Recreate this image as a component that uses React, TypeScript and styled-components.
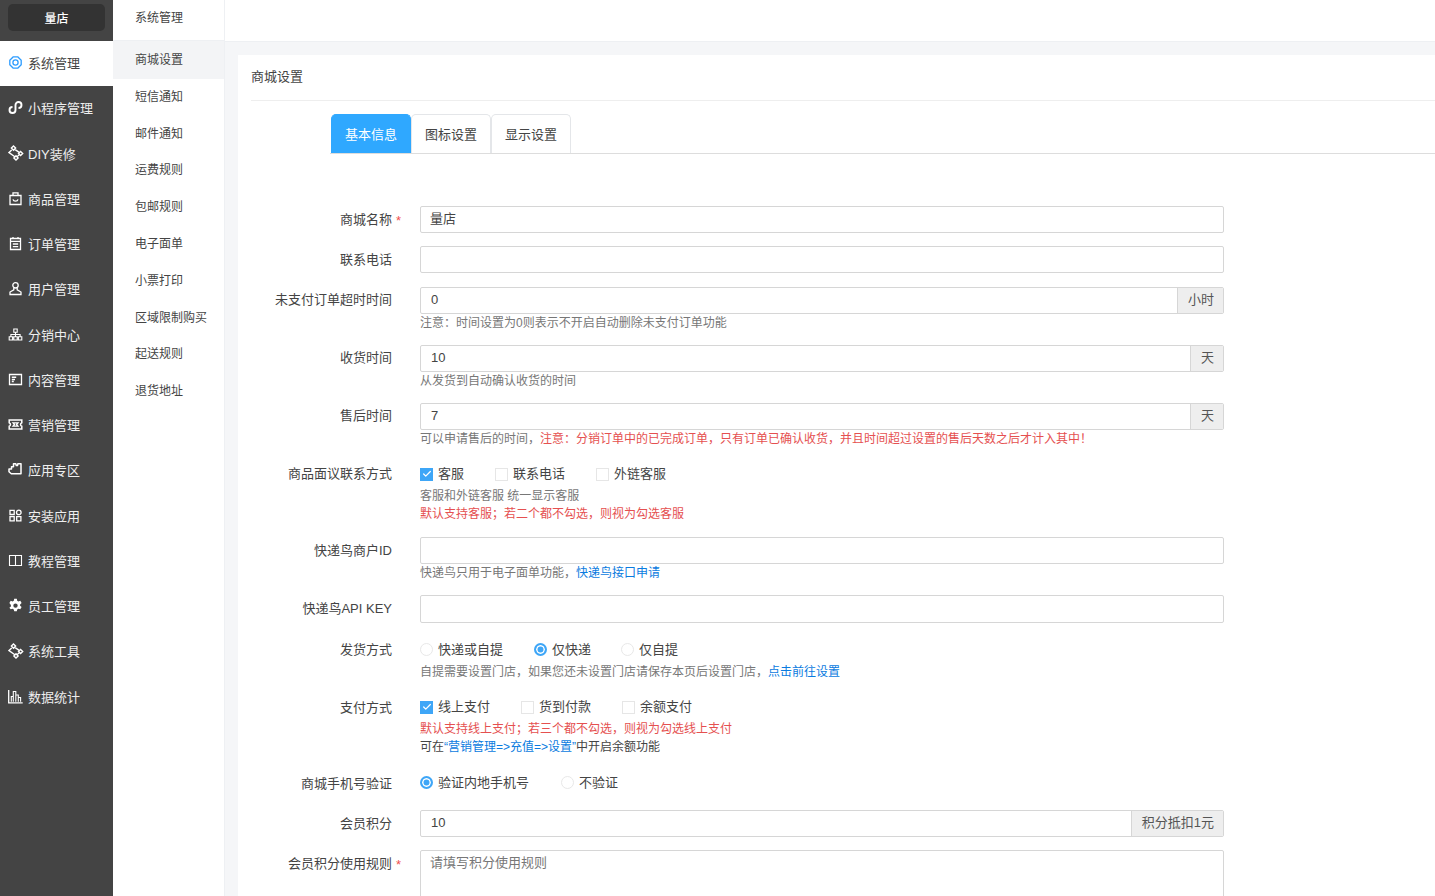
import React from "react";
import styled, { createGlobalStyle } from "styled-components";
import { Check } from "lucide-react";

const GlobalStyle = createGlobalStyle`
  html, body {
    margin: 0;
    padding: 0;
    height: 100%;
    overflow: hidden;
    background: #f5f6f8;
    font-family: "Liberation Sans", "Noto Sans CJK SC", sans-serif;
    font-size: 13px;
    color: #444;
  }
  * { box-sizing: border-box; }
`;

const Page = styled.div`
  display: flex;
  height: 896px;
  overflow: hidden;
`;

/* main dark menu */
const Sidebar = styled.nav`
  width: 113px;
  flex: none;
  background: #444;
`;
const LogoWrap = styled.div`
  height: 41px;
  padding: 4px 8px 10px;
`;
const Logo = styled.div`
  height: 27px;
  border-radius: 5px;
  background: #333;
  color: #fff;
  font-size: 12px;
  font-weight: 500;
  display: flex;
  align-items: center;
  justify-content: center;
`;
const NavItem = styled.div<{ $active?: boolean }>`
  height: 45.25px;
  display: flex;
  align-items: center;
  gap: 5px;
  padding: 0 0 2px 8px;
  background: ${(p) => (p.$active ? "#fff" : "transparent")};
  color: ${(p) => (p.$active ? "#444" : "#eee")};
  font-size: 13px;
  svg {
    flex: none;
    color: ${(p) => (p.$active ? "#2d9cff" : "#fff")};
  }
`;

/* second level menu */
const SubMenu = styled.div`
  width: 112px;
  flex: none;
  background: #fff;
  border-right: 1px solid #eef0f3;
`;
const SubTitle = styled.div`
  height: 41px;
  padding-left: 22px;
  font-size: 12px;
  line-height: 36px;
  border-bottom: 1px solid #eef0f3;
`;
const SubItem = styled.div<{ $active?: boolean }>`
  height: ${(p) => (p.$active ? "37.8px" : "36.8px")};
  margin-bottom: ${(p) => (p.$active ? "-1px" : "0")};
  padding-left: 22px;
  font-size: 12px;
  line-height: 39px;
  background: ${(p) => (p.$active ? "#f3f4f6" : "transparent")};
`;

const Main = styled.main`
  flex: 1;
  min-width: 0;
`;
const TopBar = styled.div`
  height: 42px;
  background: #fff;
  border-bottom: 1px solid #eef0f3;
`;
const Card = styled.section`
  margin: 13px 0 0 13px;
  background: #fff;
  padding: 0 0 0 13px;
  height: 900px;
`;
const CardTitle = styled.div`
  height: 46px;
  line-height: 44px;
  border-bottom: 1px solid #eee;
  font-size: 13px;
`;
const Tabs = styled.div`
  display: flex;
  height: 40px;
  margin: 13px 0 0 79px;
  padding-left: 1px;
  border-bottom: 1px solid #ddd;
`;
const Tab = styled.div<{ $active?: boolean }>`
  width: 80px;
  height: 39px;
  padding-bottom: 2px;
  display: flex;
  align-items: center;
  justify-content: center;
  font-size: 13px;
  border-radius: 5px 5px 0 0;
  background: ${(p) => (p.$active ? "#2fa8ff" : "#fff")};
  color: ${(p) => (p.$active ? "#fff" : "#444")};
  border: 1px solid ${(p) => (p.$active ? "#2fa8ff" : "#e4e6e9")};
  border-bottom: none;
`;

const Form = styled.div`
  padding-top: 52px;
`;
const Row = styled.div<{ $gap: number }>`
  display: flex;
  margin-bottom: ${(p) => p.$gap}px;
`;
const Label = styled.div<{ $tight?: boolean }>`
  width: 141px;
  height: 26px;
  flex: none;
  text-align: right;
  font-size: 13px;
  line-height: ${(p) => (p.$tight ? "26px" : "27px")};
  white-space: nowrap;
  position: relative;
`;
const Star = styled.span`
  position: absolute;
  left: 145px;
  top: 1px;
  color: #f04f4f;
  font-size: 13px;
`;
const Field = styled.div`
  margin-left: 28px;
  width: 804px;
  flex: none;
`;
const InputBox = styled.div<{ $h?: number }>`
  height: ${(p) => p.$h ?? 27}px;
  display: flex;
  border: 1px solid #d6d6d6;
  border-radius: 2px;
  background: #fff;
  overflow: hidden;
`;
const Value = styled.div<{ $muted?: boolean; $pad?: number }>`
  flex: 1;
  padding: 0 ${(p) => p.$pad ?? 10}px;
  line-height: 24px;
  font-size: 13px;
  color: ${(p) => (p.$muted ? "#777" : "#444")};
`;
const Addon = styled.div`
  flex: none;
  padding: 0 9px 0 10px;
  line-height: 24px;
  background: #eeeeee;
  border-left: 1px solid #d6d6d6;
  font-size: 13px;
  color: #555;
`;
const Hint = styled.div<{ $tone?: "red" | "dark" }>`
  font-size: 12px;
  line-height: 19px;
  margin-bottom: -1px;
  white-space: nowrap;
  color: ${(p) => (p.$tone === "red" ? "#e55050" : p.$tone === "dark" ? "#444" : "#777")};
`;
const Red = styled.span`
  color: #e55050;
`;
const LinkText = styled.span`
  color: #0a7be0;
`;
const OptionRow = styled.div`
  height: 26px;
  display: flex;
  align-items: center;
`;
const Option = styled.div<{ $width: number }>`
  width: ${(p) => p.$width}px;
  display: flex;
  align-items: center;
  gap: 5px;
  font-size: 13px;
`;
const OptionText = styled.span`
  margin-bottom: 3px;
`;
const CheckBox = styled.span<{ $on?: boolean }>`
  width: 13px;
  height: 13px;
  display: flex;
  align-items: center;
  justify-content: center;
  background: ${(p) => (p.$on ? "#3ea6f7" : "#fff")};
  border: 1px solid ${(p) => (p.$on ? "#3ea6f7" : "#e6e6e6")};
  color: #fff;
`;
const Radio = styled.span<{ $on?: boolean }>`
  width: 13px;
  height: 13px;
  margin-bottom: 2px;
  border-radius: 50%;
  background: ${(p) => (p.$on ? "#3ea6f7" : "#fff")};
  border: ${(p) => (p.$on ? "2px solid #3ea6f7" : "1px solid #e8e8e8")};
  box-shadow: ${(p) => (p.$on ? "inset 0 0 0 1.5px #fff" : "none")};
`;

const Icon = ({ children }: { children: React.ReactNode }) => (
  <svg width="15" height="15" viewBox="0 0 15 15" fill="none" stroke="currentColor" strokeWidth="1.3">
    {children}
  </svg>
);

const diy = (
  <svg width="16" height="16" viewBox="0 0 16 16" fill="none" stroke="currentColor" strokeWidth="1.4" style={{ marginRight: -1 }}>
    <path d="M5.500 1l2.100 2.100-2.100 2.100-2.100-2.100zM12.600 6.400l2.100 2.100-2.100 2.100-2.100-2.100zM8 10.800l2.100 2.100L8 15l-2.100-2.100zM3.700 5L1 7.500l5.500 4M6.800 4.300l4.400 3M9.500 11.300l1.800-1.500" />
  </svg>
);

const navItems: { name: string; icon: React.ReactNode }[] = [
  {
    name: "系统管理",
    icon: (
      <Icon>
        <path d="M5.300 1.800h4.400l3.500 3.500v4.400l-3.500 3.500H5.300L1.800 9.700V5.300z" strokeLinejoin="round" strokeWidth="1.300" />
        <circle cx="7.500" cy="7.500" r="2.600" strokeWidth="1.300" />
      </Icon>
    ),
  },
  {
    name: "小程序管理",
    icon: (
      <Icon>
        <path d="M4.500 7a3 3 0 1 0 3 3V5a3 3 0 1 1 3 3" strokeWidth="1.900" />
      </Icon>
    ),
  },
  { name: "DIY装修", icon: diy },
  {
    name: "商品管理",
    icon: (
      <Icon>
        <path d="M2 4.500h11v9H2zM5 4.500V1.800h5v2.700M5 8.300c.5 2.400 4.500 2.400 5 0" />
      </Icon>
    ),
  },
  {
    name: "订单管理",
    icon: (
      <Icon>
        <path d="M2.500 2.500h10v11h-10zM2.500 5.300h10M4.800 8h5.400M4.800 10.700h5.400M5 1v2M10 1v2" />
      </Icon>
    ),
  },
  {
    name: "用户管理",
    icon: (
      <Icon>
        <circle cx="7.500" cy="4.300" r="2.700" />
        <path d="M5.800 7v1.800L2 11v2.500h11V11L9.200 8.800V7" />
      </Icon>
    ),
  },
  {
    name: "分销中心",
    icon: (
      <Icon>
        <path d="M5.800 2h3.400v3.200H5.800zM1.200 9.800h3.400v3.200H1.200zM5.800 9.800h3.400v3.200H5.800zM10.400 9.800h3.400v3.200h-3.400zM2.900 9.800V7.500h9.200v2.300M7.500 5.200v4.600" strokeWidth="1.100" />
      </Icon>
    ),
  },
  {
    name: "内容管理",
    icon: (
      <Icon>
        <path d="M1.500 2.500h12v10h-12z" />
        <path d="M3.800 5.200h4.400M3.800 7.400h3.200M3.800 9.600h2" strokeWidth="1.500" />
      </Icon>
    ),
  },
  {
    name: "营销管理",
    icon: (
      <Icon>
        <path d="M1.200 3h12.600v2.700a1.900 1.900 0 0 0 0 3.600V12H1.200V9.300a1.900 1.900 0 0 0 0-3.600z" strokeWidth="1.500" />
        <path d="M5 5.800l1.500 1.700L5 9.200h5L8.500 7.500 10 5.800z" />
      </Icon>
    ),
  },
  {
    name: "应用专区",
    icon: (
      <Icon>
        <path d="M1 7h2.500V4.800h2V1.800h2.300l.5 1.800h1.200l.3-1.800h3.200v10H3.300L1 9.800z" strokeLinejoin="round" strokeWidth="1.500" />
      </Icon>
    ),
  },
  {
    name: "安装应用",
    icon: (
      <Icon>
        <path d="M2 2.300h4.200v4.200H2zM2 8.700h4.200v4.200H2zM8.700 8.700h4.200v4.200H8.700z" />
        <circle cx="10.800" cy="4.400" r="2.300" />
      </Icon>
    ),
  },
  {
    name: "教程管理",
    icon: (
      <Icon>
        <path d="M1.500 2.500h12v10h-12zM7.500 2.500v10" strokeWidth="1.100" />
      </Icon>
    ),
  },
  {
    name: "员工管理",
    icon: (
      <svg width="15" height="15" viewBox="0 0 15 15" fill="currentColor">
        <path
          fillRule="evenodd"
          d="M6.200.8h2.600l.4 1.900 1.200.7 1.900-.6 1.300 2.300-1.500 1.300v1.300l1.500 1.300-1.300 2.300-1.900-.6-1.200.7-.4 1.900H6.200l-.4-1.900-1.200-.7-1.900.6L1.400 9.700l1.500-1.300V7.100L1.400 5.100l1.300-2.300 1.900.6 1.200-.7zM7.500 5.400a2.200 2.200 0 1 0 0 4.400 2.200 2.200 0 0 0 0-4.400z"
        />
      </svg>
    ),
  },
  { name: "系统工具", icon: diy },
  {
    name: "数据统计",
    icon: (
      <Icon>
        <path d="M.7 1v12.800h14" />
        <path d="M3.300 12.800V7.500h2v5.300M5.300 12.800V2.500h2.500v10.300M7.800 12.800V6h2.500v6.800M10.300 12.800V8.500h2.300v4.300" strokeWidth="1.100" />
      </Icon>
    ),
  },
];

const subItems = [
  "商城设置",
  "短信通知",
  "邮件通知",
  "运费规则",
  "包邮规则",
  "电子面单",
  "小票打印",
  "区域限制购买",
  "起送规则",
  "退货地址",
];

const Box = ({ on, children, width }: { on?: boolean; children: string; width: number }) => (
  <Option $width={width}>
    <CheckBox $on={on}>{on && <Check size={10} strokeWidth={3} />}</CheckBox>
    <OptionText>{children}</OptionText>
  </Option>
);

const RadioOption = ({ on, children, width }: { on?: boolean; children: string; width: number }) => (
  <Option $width={width}>
    <Radio $on={on} />
    <OptionText>{children}</OptionText>
  </Option>
);

export default function App() {
  return (
    <Page>
      <GlobalStyle />
      <Sidebar>
        <LogoWrap>
          <Logo>量店</Logo>
        </LogoWrap>
        {navItems.map((item, i) => (
          <NavItem key={item.name} $active={i === 0}>
            {item.icon}
            {item.name}
          </NavItem>
        ))}
      </Sidebar>
      <SubMenu>
        <SubTitle>系统管理</SubTitle>
        {subItems.map((item, i) => (
          <SubItem key={item} $active={i === 0}>
            {item}
          </SubItem>
        ))}
      </SubMenu>
      <Main>
        <TopBar />
        <Card>
          <CardTitle>商城设置</CardTitle>
          <Tabs>
            <Tab $active>基本信息</Tab>
            <Tab>图标设置</Tab>
            <Tab>显示设置</Tab>
          </Tabs>
          <Form>
            <Row $gap={13}>
              <Label>
                商城名称<Star>*</Star>
              </Label>
              <Field>
                <InputBox>
                  <Value $pad={9}>量店</Value>
                </InputBox>
              </Field>
            </Row>
            <Row $gap={14}>
              <Label>联系电话</Label>
              <Field>
                <InputBox />
              </Field>
            </Row>
            <Row $gap={13}>
              <Label $tight>未支付订单超时时间</Label>
              <Field>
                <InputBox>
                  <Value>0</Value>
                  <Addon>小时</Addon>
                </InputBox>
                <Hint>注意：时间设置为0则表示不开启自动删除未支付订单功能</Hint>
              </Field>
            </Row>
            <Row $gap={13}>
              <Label $tight>收货时间</Label>
              <Field>
                <InputBox>
                  <Value>10</Value>
                  <Addon>天</Addon>
                </InputBox>
                <Hint>从发货到自动确认收货的时间</Hint>
              </Field>
            </Row>
            <Row $gap={13}>
              <Label $tight>售后时间</Label>
              <Field>
                <InputBox>
                  <Value>7</Value>
                  <Addon>天</Addon>
                </InputBox>
                <Hint>
                  可以申请售后的时间，<Red>注意：分销订单中的已完成订单，只有订单已确认收货，并且时间超过设置的售后天数之后才计入其中！</Red>
                </Hint>
              </Field>
            </Row>
            <Row $gap={14}>
              <Label $tight>商品面议联系方式</Label>
              <Field>
                <OptionRow>
                  <Box on width={75}>
                    客服
                  </Box>
                  <Box width={101}>联系电话</Box>
                  <Box width={90}>外链客服</Box>
                </OptionRow>
                <Hint>客服和外链客服 统一显示客服</Hint>
                <Hint $tone="red">默认支持客服；若二个都不勾选，则视为勾选客服</Hint>
              </Field>
            </Row>
            <Row $gap={13}>
              <Label>快递鸟商户ID</Label>
              <Field>
                <InputBox>
                  <Value />
                </InputBox>
                <Hint>
                  快递鸟只用于电子面单功能，<LinkText>快递鸟接口申请</LinkText>
                </Hint>
              </Field>
            </Row>
            <Row $gap={14}>
              <Label>快递鸟API KEY</Label>
              <Field>
                <InputBox $h={28} />
              </Field>
            </Row>
            <Row $gap={13}>
              <Label $tight>发货方式</Label>
              <Field>
                <OptionRow>
                  <RadioOption width={114}>快递或自提</RadioOption>
                  <RadioOption on width={87}>
                    仅快递
                  </RadioOption>
                  <RadioOption width={90}>仅自提</RadioOption>
                </OptionRow>
                <Hint>
                  自提需要设置门店，如果您还未设置门店请保存本页后设置门店，<LinkText>点击前往设置</LinkText>
                </Hint>
              </Field>
            </Row>
            <Row $gap={14}>
              <Label>支付方式</Label>
              <Field>
                <OptionRow>
                  <Box on width={101}>
                    线上支付
                  </Box>
                  <Box width={101}>货到付款</Box>
                  <Box width={90}>余额支付</Box>
                </OptionRow>
                <Hint $tone="red">默认支持线上支付；若三个都不勾选，则视为勾选线上支付</Hint>
                <Hint $tone="dark">
                  可在<LinkText>“营销管理=&gt;充值=&gt;设置”</LinkText>中开启余额功能
                </Hint>
              </Field>
            </Row>
            <Row $gap={14}>
              <Label>商城手机号验证</Label>
              <Field>
                <OptionRow>
                  <RadioOption on width={141}>
                    验证内地手机号
                  </RadioOption>
                  <RadioOption width={90}>不验证</RadioOption>
                </OptionRow>
              </Field>
            </Row>
            <Row $gap={13}>
              <Label>会员积分</Label>
              <Field>
                <InputBox>
                  <Value>10</Value>
                  <Addon>积分抵扣1元</Addon>
                </InputBox>
              </Field>
            </Row>
            <Row $gap={13}>
              <Label>
                会员积分使用规则<Star>*</Star>
              </Label>
              <Field>
                <InputBox $h={80}>
                  <Value $muted $pad={9}>
                    请填写积分使用规则
                  </Value>
                </InputBox>
              </Field>
            </Row>
          </Form>
        </Card>
      </Main>
    </Page>
  );
}
